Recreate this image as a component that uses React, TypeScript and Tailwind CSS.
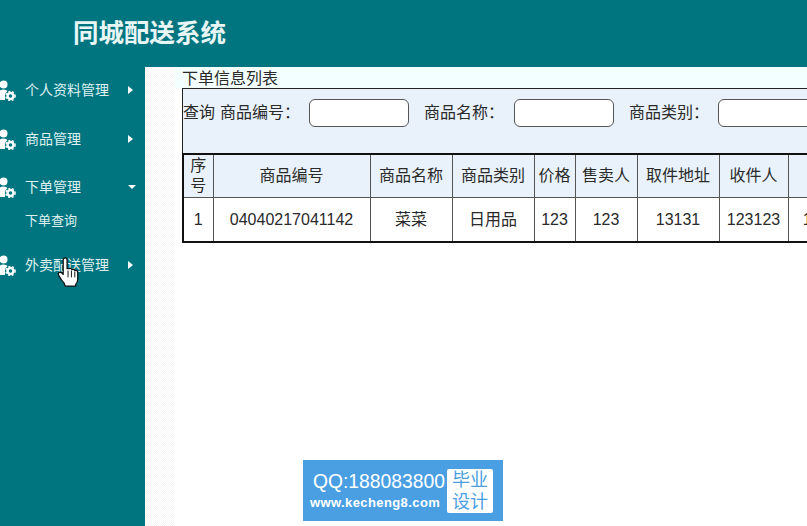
const CJK = "font-['Liberation_Sans','Noto_Sans_CJK_SC',sans-serif]"

const headers = [
  { label: '序号', width: 'w-[30px]' },
  { label: '商品编号', width: 'w-[157px]' },
  { label: '商品名称', width: 'w-[82px]' },
  { label: '商品类别', width: 'w-[82px]' },
  { label: '价格', width: 'w-[41px]' },
  { label: '售卖人', width: 'w-[62px]' },
  { label: '取件地址', width: 'w-[82px]' },
  { label: '收件人', width: 'w-[69px]' },
  { label: '收件地址', width: 'w-[110px]' },
]

const row = ['1', '04040217041142', '菜菜', '日用品', '123', '123', '13131', '123123', '131313131']

function UserGear() {
  return (
    <svg width="16" height="21" viewBox="0 0 16 21" className="shrink-0">
      <circle cx="3.500" cy="4.500" r="4" fill="#fff" />
      <path d="M-1 20 L-1 12 Q0 9.500 3.500 9.500 Q6.500 9.500 7.500 11 L5 14 L5 20 Z" fill="#fff" />
      <circle cx="10.500" cy="16" r="3" fill="none" stroke="#fff" strokeWidth="2.400" />
      <circle cx="10.500" cy="16" r="4.600" fill="none" stroke="#fff" strokeWidth="1.400" strokeDasharray="1.800 2" />
    </svg>
  )
}

function MenuItem({ label, open, className }: { label: string; open?: boolean; className?: string }) {
  return (
    <div className={`flex h-[46px] items-center ${className ?? ''}`}>
      <UserGear />
      <span className="ml-[9px] w-[103px] text-[14px] text-[#dff0f1]">{label}</span>
      {open ? (
        <span className="h-0 w-0 border-x-[4px] border-t-[4px] border-x-transparent border-t-white" />
      ) : (
        <span className="h-0 w-0 border-y-[4px] border-l-[5px] border-y-transparent border-l-white" />
      )}
    </div>
  )
}

function FilterField({ label, gap }: { label: string; gap: string }) {
  return (
    <>
      <span className="ml-[5px] w-[70px] shrink-0 whitespace-nowrap">{label}：</span>
      <span className={`h-[28px] w-[100px] shrink-0 rounded-[6px] border border-[#555] bg-white ${gap}`} />
    </>
  )
}

export default function App() {
  return (
    <div className={`relative flex h-[526px] w-[807px] flex-col overflow-hidden bg-[#007580] ${CJK}`}>
      <header className="flex h-[67px] shrink-0 items-center pl-[73px]">
        <h1 className="text-[25.500px] font-bold text-[#e8f6f6]">同城配送系统</h1>
      </header>

      <div className="flex min-h-0 flex-1">
        <aside className="w-[145px] shrink-0">
          <MenuItem label="个人资料管理" className="mb-[3px]" />
          <MenuItem label="商品管理" className="mb-[2px]" />
          <MenuItem label="下单管理" open />
          <div className="flex h-[32px] items-start pl-[25px] pt-[1px] text-[13px] text-[#dff0f1]">下单查询</div>
          <MenuItem label="外卖配送管理" />
        </aside>

        <main className="flex min-w-0 flex-1 bg-white text-[#2a2a2a]">
          <div className="w-[30px] shrink-0 bg-[repeating-conic-gradient(#f7f7f7_0_25%,#ffffff_0_50%)] bg-[length:2px_2px]" />
          <div className="min-w-0 flex-1">
            <div className="h-[21px] bg-[#f2fffe] pl-[7px] text-[16px] leading-[24px]">下单信息列表</div>
            <div className="ml-[7px] w-[900px]">
              <div className="flex h-[65px] items-start border-l border-t border-[#222] bg-[#e9f2fb] pt-[10px] text-[16px] leading-[28px]">
                <span className="w-[32px] shrink-0 whitespace-nowrap">查询</span>
                <FilterField label="商品编号" gap="ml-[19px]" />
                <span className="w-[10px] shrink-0" />
                <FilterField label="商品名称" gap="ml-[20px]" />
                <span className="w-[10px] shrink-0" />
                <FilterField label="商品类别" gap="ml-[19px]" />
              </div>
              <table className="table-fixed border-collapse border-2 border-[#111] text-[16px]">
                <thead>
                  <tr className="h-[43px] bg-[#e9f2fb]">
                    {headers.map((h) => (
                      <th key={h.label} className={`${h.width} border border-[#555] p-0 text-center font-normal leading-[20px]`}>
                        {h.label}
                      </th>
                    ))}
                  </tr>
                </thead>
                <tbody>
                  <tr className="h-[45px]">
                    {row.map((cell, i) => (
                      <td key={i} className="border border-[#555] p-0 pt-[1px] text-center">
                        {cell}
                      </td>
                    ))}
                  </tr>
                </tbody>
              </table>
            </div>
          </div>
        </main>
      </div>

      {/* 水印 */}
      <div className="absolute left-[303px] top-[460px] flex h-[61px] w-[200px] items-center bg-[#4a9fe3] pl-[7px]">
        <div className="w-[134px] text-white">
          <div className="whitespace-nowrap pl-[3px] text-[19.300px] leading-[25px]">QQ:188083800</div>
          <div className="whitespace-nowrap text-[13px] font-bold leading-[18px] tracking-[0.4px]">www.kecheng8.com</div>
        </div>
        <div className="ml-[3px] flex h-[44px] w-[46px] items-center justify-center rounded-[2px] bg-white text-center text-[18px] leading-[22px] text-[#4a9fe3]">
          毕业
          <br />
          设计
        </div>
      </div>

      {/* 鼠标手型 */}
      <svg width="24" height="31" viewBox="0 0 24 32" className="absolute left-[57px] top-[257px]">
        <path
          d="M6 3 Q6 1 8 1 Q10 1 10 3 L10 12 L12 12 Q14 11 15 13 Q17 12 18 14 Q20 13.500 21 15 L21 23 Q21 26 19 28 L19 30 L8 30 L7 27 Q4 24 2 20 Q0 17 2 16 Q4 15 6 18 Z"
          fill="#fff"
          stroke="#111"
          strokeWidth="1.300"
          strokeLinejoin="round"
        />
        <path d="M11 14 V21 M14.500 14 V21 M18 15 V21" stroke="#111" strokeWidth="1" fill="none" />
      </svg>
    </div>
  )
}
